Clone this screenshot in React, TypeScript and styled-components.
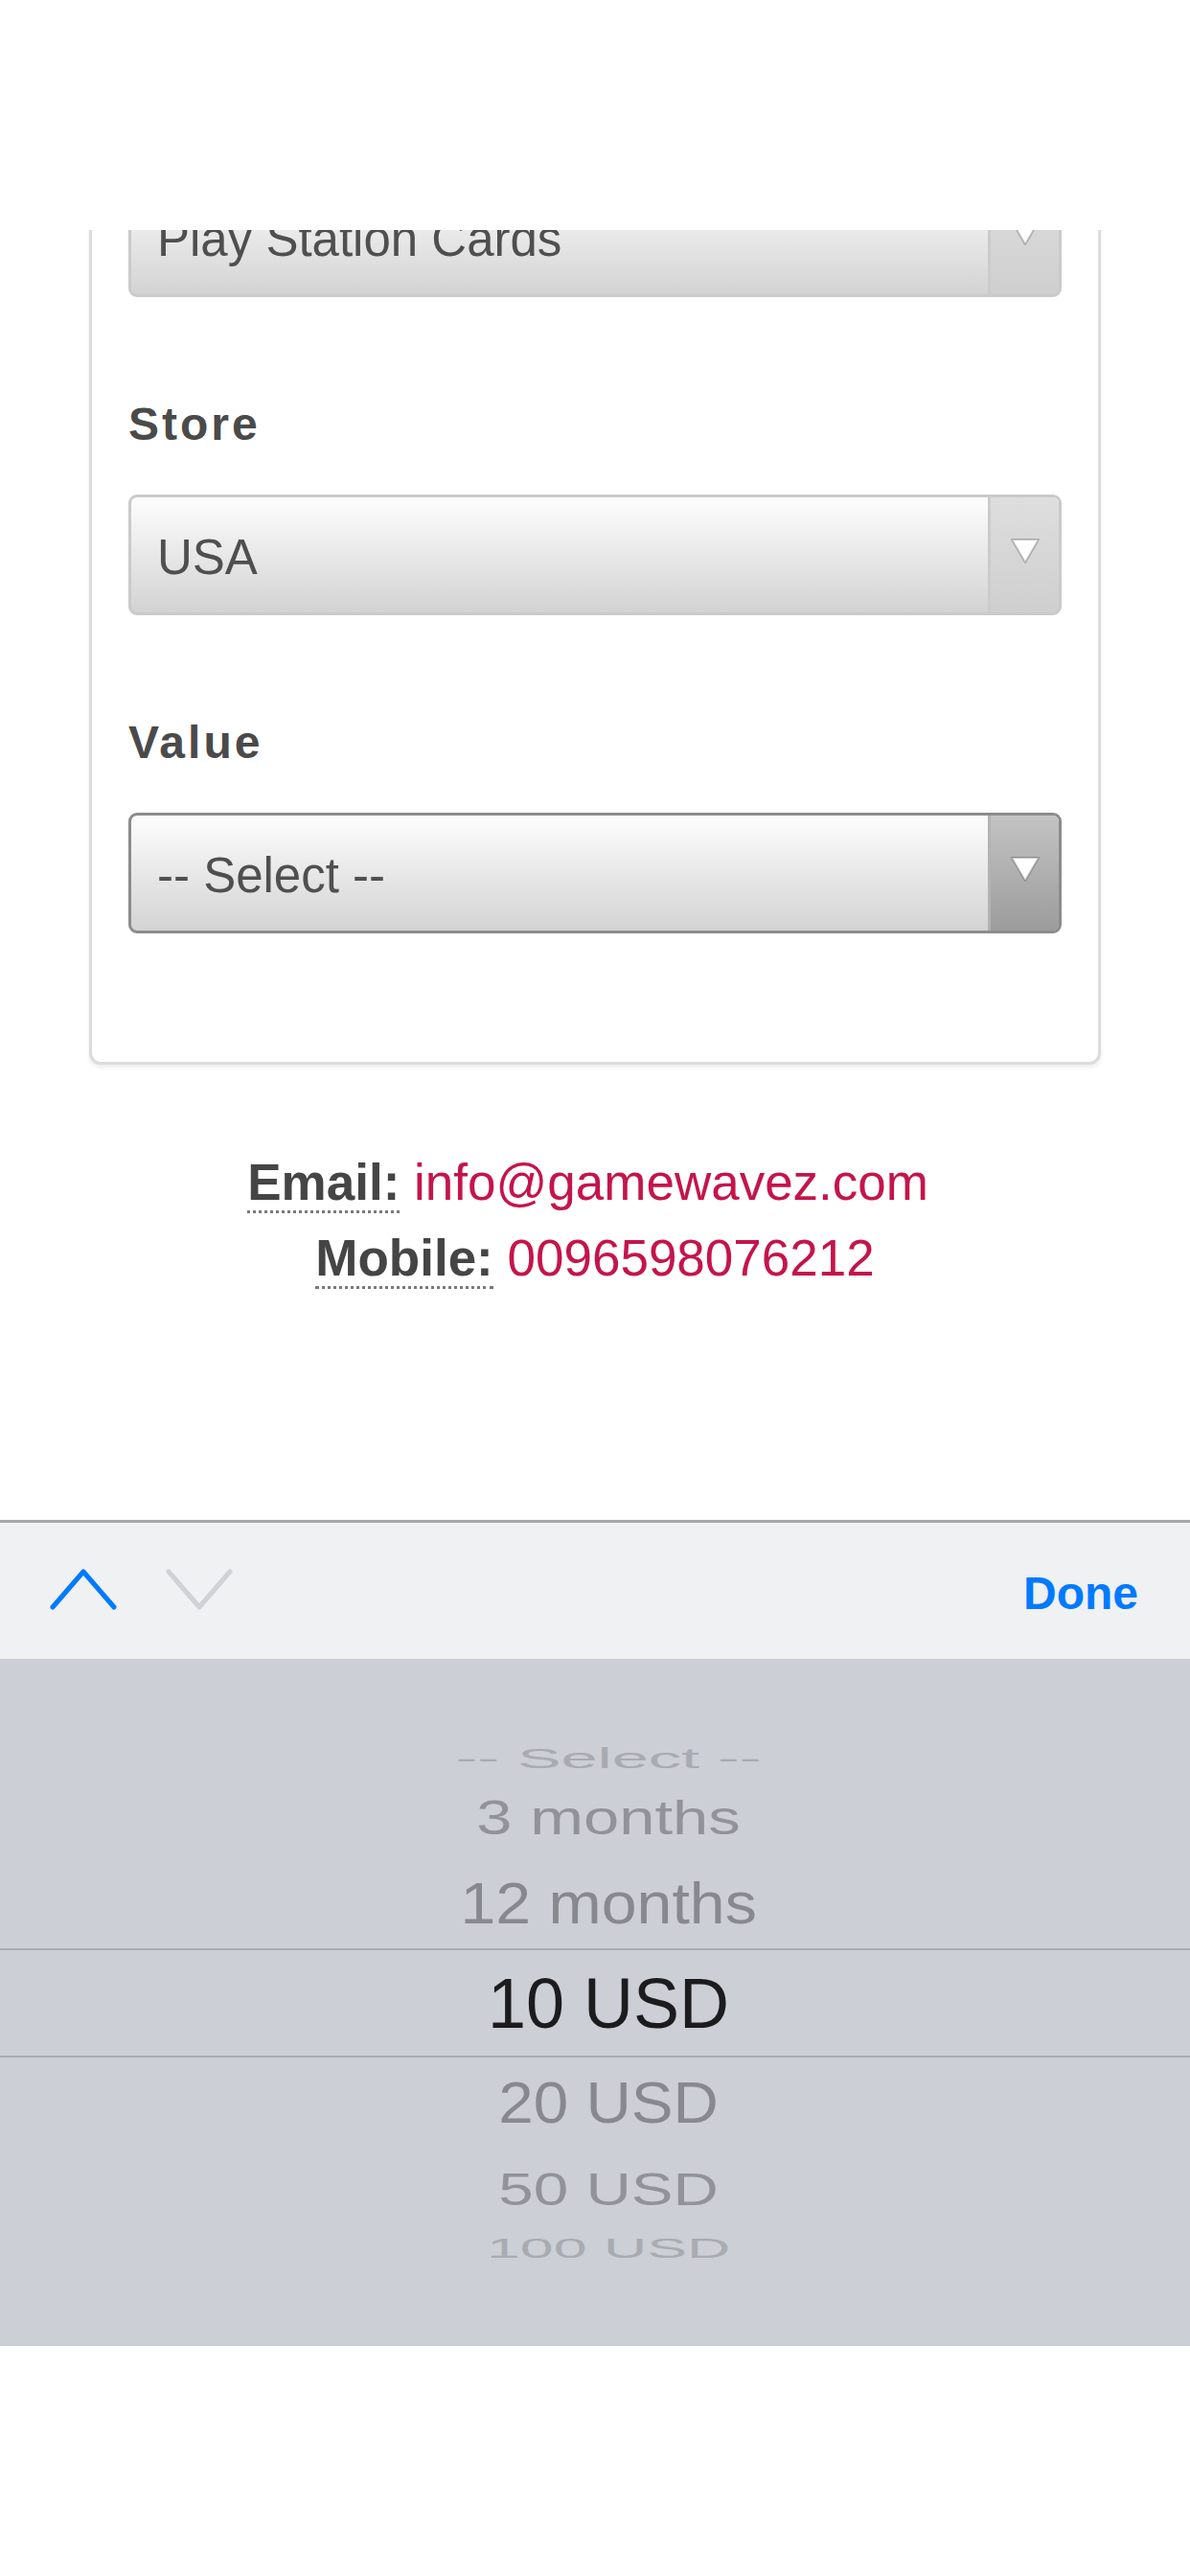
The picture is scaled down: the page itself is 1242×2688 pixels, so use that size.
import React, { useLayoutEffect, useRef } from "react";
import styled, { createGlobalStyle } from "styled-components";

const GlobalStyle = createGlobalStyle`
  html, body {
    margin: 0;
    padding: 0;
    background: #fff;
  }
  body {
    font-family: "Liberation Sans", Arial, Helvetica, sans-serif;
  }
`;

const fields = [
  { label: "Category", value: "Play Station Cards" },
  { label: "Store", value: "USA" },
  { label: "Value", value: "-- Select --", active: true },
];

const pickerRows = [
  { text: "-- Select --", h: 38, sx: 0.95, sy: 0.42, color: "#a9abb1" },
  { text: "3 months", h: 86, sx: 0.93, sy: 0.7, color: "#929399" },
  { text: "12 months", h: 94, sx: 0.92, sy: 0.84, color: "#88898e" },
  { text: "10 USD", h: 114, sx: 1, sy: 1.04, color: "#1c1c1e", selected: true },
  { text: "20 USD", h: 94, sx: 0.91, sy: 0.85, color: "#88898e" },
  { text: "50 USD", h: 86, sx: 0.91, sy: 0.68, color: "#929399" },
  { text: "100 USD", h: 38, sx: 0.87, sy: 0.4, color: "#a9abb1" },
];

const Arrow = () => (
  <svg width="34" height="30" viewBox="0 0 34 30">
    <polygon points="3,3 31,3 17,27" fill="#fff" stroke="rgba(0,0,0,0.22)" strokeWidth="2" strokeLinejoin="round" />
  </svg>
);

const Chevron = ({ up, color }: { up?: boolean; color: string }) => (
  <svg width="70" height="44" viewBox="0 0 70 44">
    <polyline
      points={up ? "3,41 35,4 67,41" : "3,4 35,41 67,4"}
      fill="none"
      stroke={color}
      strokeWidth="5"
      strokeLinecap="round"
      strokeLinejoin="round"
    />
  </svg>
);

export default function App() {
  const viewRef = useRef<HTMLDivElement>(null);
  const firstSelectRef = useRef<HTMLDivElement>(null);

  // the form is scrolled so that the first dropdown sits half under the header
  useLayoutEffect(() => {
    if (viewRef.current && firstSelectRef.current) {
      viewRef.current.scrollTop = firstSelectRef.current.offsetTop + 56;
    }
  }, []);

  return (
    <>
      <GlobalStyle />
      <Screen>
        <TopBar />
        <Viewport ref={viewRef}>
          <Content>
            <Card>
              {fields.map((f, i) => (
                <Field key={f.label}>
                  <Label>{f.label}</Label>
                  <SelectBox $active={f.active} ref={i === 0 ? firstSelectRef : undefined}>
                    <SelectText>{f.value}</SelectText>
                    <ArrowCell $active={f.active}>
                      <Arrow />
                    </ArrowCell>
                  </SelectBox>
                </Field>
              ))}
            </Card>
            <Contact>
              <div>
                <ContactLabel title="Email">Email:</ContactLabel>{" "}
                <ContactLink href="#">info@gamewavez.com</ContactLink>
                {"\u00a0"}
              </div>
              <div>
                <ContactLabel title="Mobile">Mobile:</ContactLabel>{" "}
                <ContactLink href="#">0096598076212</ContactLink>
              </div>
            </Contact>
          </Content>
        </Viewport>
        <AccessoryBar>
          <Chevrons>
            <Chevron up color="#007aff" />
            <Chevron color="#d1d1d6" />
          </Chevrons>
          <Done>Done</Done>
        </AccessoryBar>
        <Picker>
          {pickerRows.map((r) => (
            <PickerRow key={r.text} $h={r.h} $selected={r.selected}>
              <PickerText $color={r.color} $sx={r.sx} $sy={r.sy}>
                {r.text}
              </PickerText>
            </PickerRow>
          ))}
        </Picker>
        <HomeArea />
      </Screen>
    </>
  );
}

const Screen = styled.div`
  width: 1242px;
  height: 2688px;
  display: flex;
  flex-direction: column;
  background: #fff;
  overflow: hidden;
`;

const TopBar = styled.div`
  flex: none;
  height: 240px;
  background: #fff;
`;

const Viewport = styled.div`
  position: relative;
  flex: none;
  height: 1346px;
  overflow: hidden;
`;

const Content = styled.div`
  padding: 40px 0 300px;
`;

const Card = styled.div`
  width: 1056px;
  box-sizing: border-box;
  margin: 0 auto;
  padding: 60px 38px 134px;
  display: flex;
  flex-direction: column;
  gap: 103px;
  background: #fff;
  border: 3px solid #dcdcdc;
  border-radius: 12px;
  box-shadow: 0 3px 4px rgba(0, 0, 0, 0.07);
`;

const Field = styled.div`
  display: flex;
  flex-direction: column;
`;

const Label = styled.div`
  font-size: 48px;
  line-height: 60px;
  font-weight: bold;
  letter-spacing: 3px;
  color: #4a4a4a;
  margin-bottom: 43px;
`;

const SelectBox = styled.div<{ $active?: boolean }>`
  height: 126px;
  box-sizing: border-box;
  display: flex;
  border: 3px solid ${(p) => (p.$active ? "#8c8c8c" : "#cacaca")};
  border-radius: 9px;
  overflow: hidden;
  background: linear-gradient(#fdfdfd, #d3d3d3);
`;

const SelectText = styled.div`
  flex: 1;
  display: flex;
  align-items: center;
  padding-left: 27px;
  padding-top: 4px;
  font-size: 51px;
  color: #4f4f4f;
  white-space: nowrap;
`;

const ArrowCell = styled.div<{ $active?: boolean }>`
  width: 74px;
  flex: none;
  display: flex;
  align-items: center;
  justify-content: center;
  padding-bottom: 8px;
  box-sizing: border-box;
  border-left: 3px solid ${(p) => (p.$active ? "#b3b3b3" : "#cbcbcb")};
  background: ${(p) =>
    p.$active ? "linear-gradient(#c3c3c3, #9c9c9c)" : "linear-gradient(#dedede, #cfcfcf)"};
`;

const Contact = styled.div`
  margin-top: 83px;
  text-align: center;
  font-size: 53px;
  line-height: 79px;
  color: #444;
`;

const ContactLabel = styled.abbr`
  font-weight: bold;
  color: #454545;
  text-decoration: none;
  border-bottom: 3px dotted #7a7a7a;
`;

const ContactLink = styled.a`
  color: #c4154b;
  text-decoration: none;
`;

const AccessoryBar = styled.div`
  flex: none;
  height: 142px;
  display: flex;
  align-items: center;
  padding: 0 54px 0 52px;
  background: #f0f1f3;
  border-top: 3px solid #a8a8ab;
`;

const Chevrons = styled.div`
  display: flex;
  align-items: center;
  gap: 51px;
  margin-top: -4px;
`;

const Done = styled.div`
  margin-left: auto;
  padding-top: 4px;
  font-size: 48px;
  font-weight: bold;
  color: #007aff;
`;

const Picker = styled.div`
  flex: none;
  height: 717px;
  display: flex;
  flex-direction: column;
  justify-content: center;
  background: #cccfd6;
`;

const PickerRow = styled.div<{ $h: number; $selected?: boolean }>`
  height: ${(p) => p.$h}px;
  box-sizing: border-box;
  display: flex;
  align-items: center;
  justify-content: center;
  padding-left: 28px;
  border-top: ${(p) => (p.$selected ? "2px solid #a9acb3" : "none")};
  border-bottom: ${(p) => (p.$selected ? "2px solid #a9acb3" : "none")};
`;

const PickerText = styled.div<{ $color: string; $sx: number; $sy: number }>`
  font-size: 72px;
  line-height: 1;
  white-space: nowrap;
  color: ${(p) => p.$color};
  transform: scale(${(p) => p.$sx}, ${(p) => p.$sy});
`;

const HomeArea = styled.div`
  flex: 1;
  background: #fff;
`;
